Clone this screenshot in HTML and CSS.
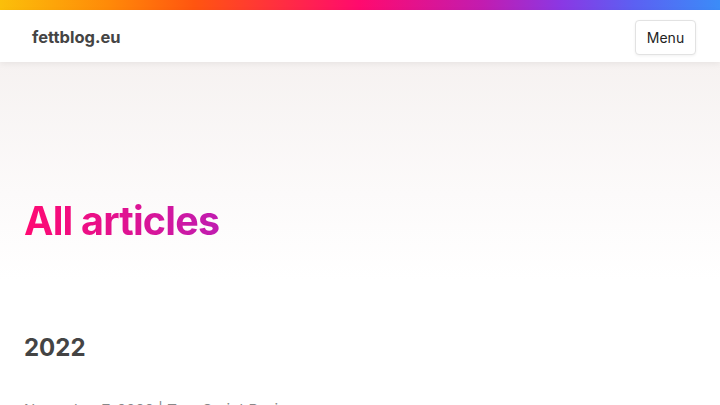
FILE: index.html
```html
<!DOCTYPE html>
<html lang="en">
<head>
<meta charset="utf-8">
<title>All articles - fettblog.eu</title>
<link rel="stylesheet" href="styles.css">
</head>
<body>
<div class="topbar"></div>
<header class="header">
  <a class="logo" href="#">fettblog.eu</a>
  <button class="menu-btn" type="button">Menu</button>
</header>
<section class="hero">
  <h1 class="title">All articles</h1>
</section>
<main class="content">
  <h2 class="year">2022</h2>
  <p class="entry">November 7, 2022 | TypeScript Basics</p>
</main>
</body>
</html>
```
FILE: styles.css
```css
* { box-sizing: border-box; }
html, body { margin: 0; padding: 0; }
body {
  font-family: Inter, "Noto Sans", "Liberation Sans", sans-serif;
  color: #444;
  background: #fff;
  overflow: hidden;
}
.topbar {
  height: 10px;
  background: linear-gradient(90deg, #fbbf0a 0%, #ff8a08 15%, #ff5510 27%, #ff0a6e 50%, #c21cb0 67%, #8a38e4 78%, #5c60f2 88%, #3b8cf8 100%);
}
.header {
  position: relative;
  z-index: 2;
  height: 52px;
  display: flex;
  align-items: center;
  justify-content: space-between;
  padding: 0 24px 0 32px;
  background: #fff;
  box-shadow: 0 2px 6px rgba(0,0,0,0.06);
}
.logo {
  font-size: 16.5px;
  font-weight: 700;
  color: #444;
  text-decoration: none;
  margin-top: 1px;
}
.menu-btn {
  font-family: Inter, "Noto Sans", "Liberation Sans", sans-serif;
  font-size: 14px;
  color: #222;
  background: #fff;
  border: 1px solid #e2e2e2;
  border-radius: 4px;
  width: 61px;
  height: 35px;
  padding: 0;
  box-shadow: 0 1px 3px rgba(0,0,0,0.06);
  margin-top: 2px;
}
.hero {
  height: 218px;
  background: linear-gradient(180deg, #f6f2f1 0%, #fcfafa 60%, #fff 100%);
  padding: 135px 24px 0;
}
.title {
  margin: 0;
  font-size: 39.5px;
  font-weight: 700;
  letter-spacing: -0.8px;
  line-height: 48px;
  background: linear-gradient(90deg, #ff0a72 0%, #e8108a 40%, #c01cb0 100%);
  -webkit-background-clip: text;
  background-clip: text;
  color: transparent;
  display: inline-block;
}
.content {
  padding: 0 24px;
}
.year {
  margin: 52px 0 0;
  font-size: 24px;
  font-weight: 700;
  line-height: 32px;
  color: #444;
}
.entry {
  margin: 36px 0 0;
  font-size: 15px;
  color: #888;
}
```
